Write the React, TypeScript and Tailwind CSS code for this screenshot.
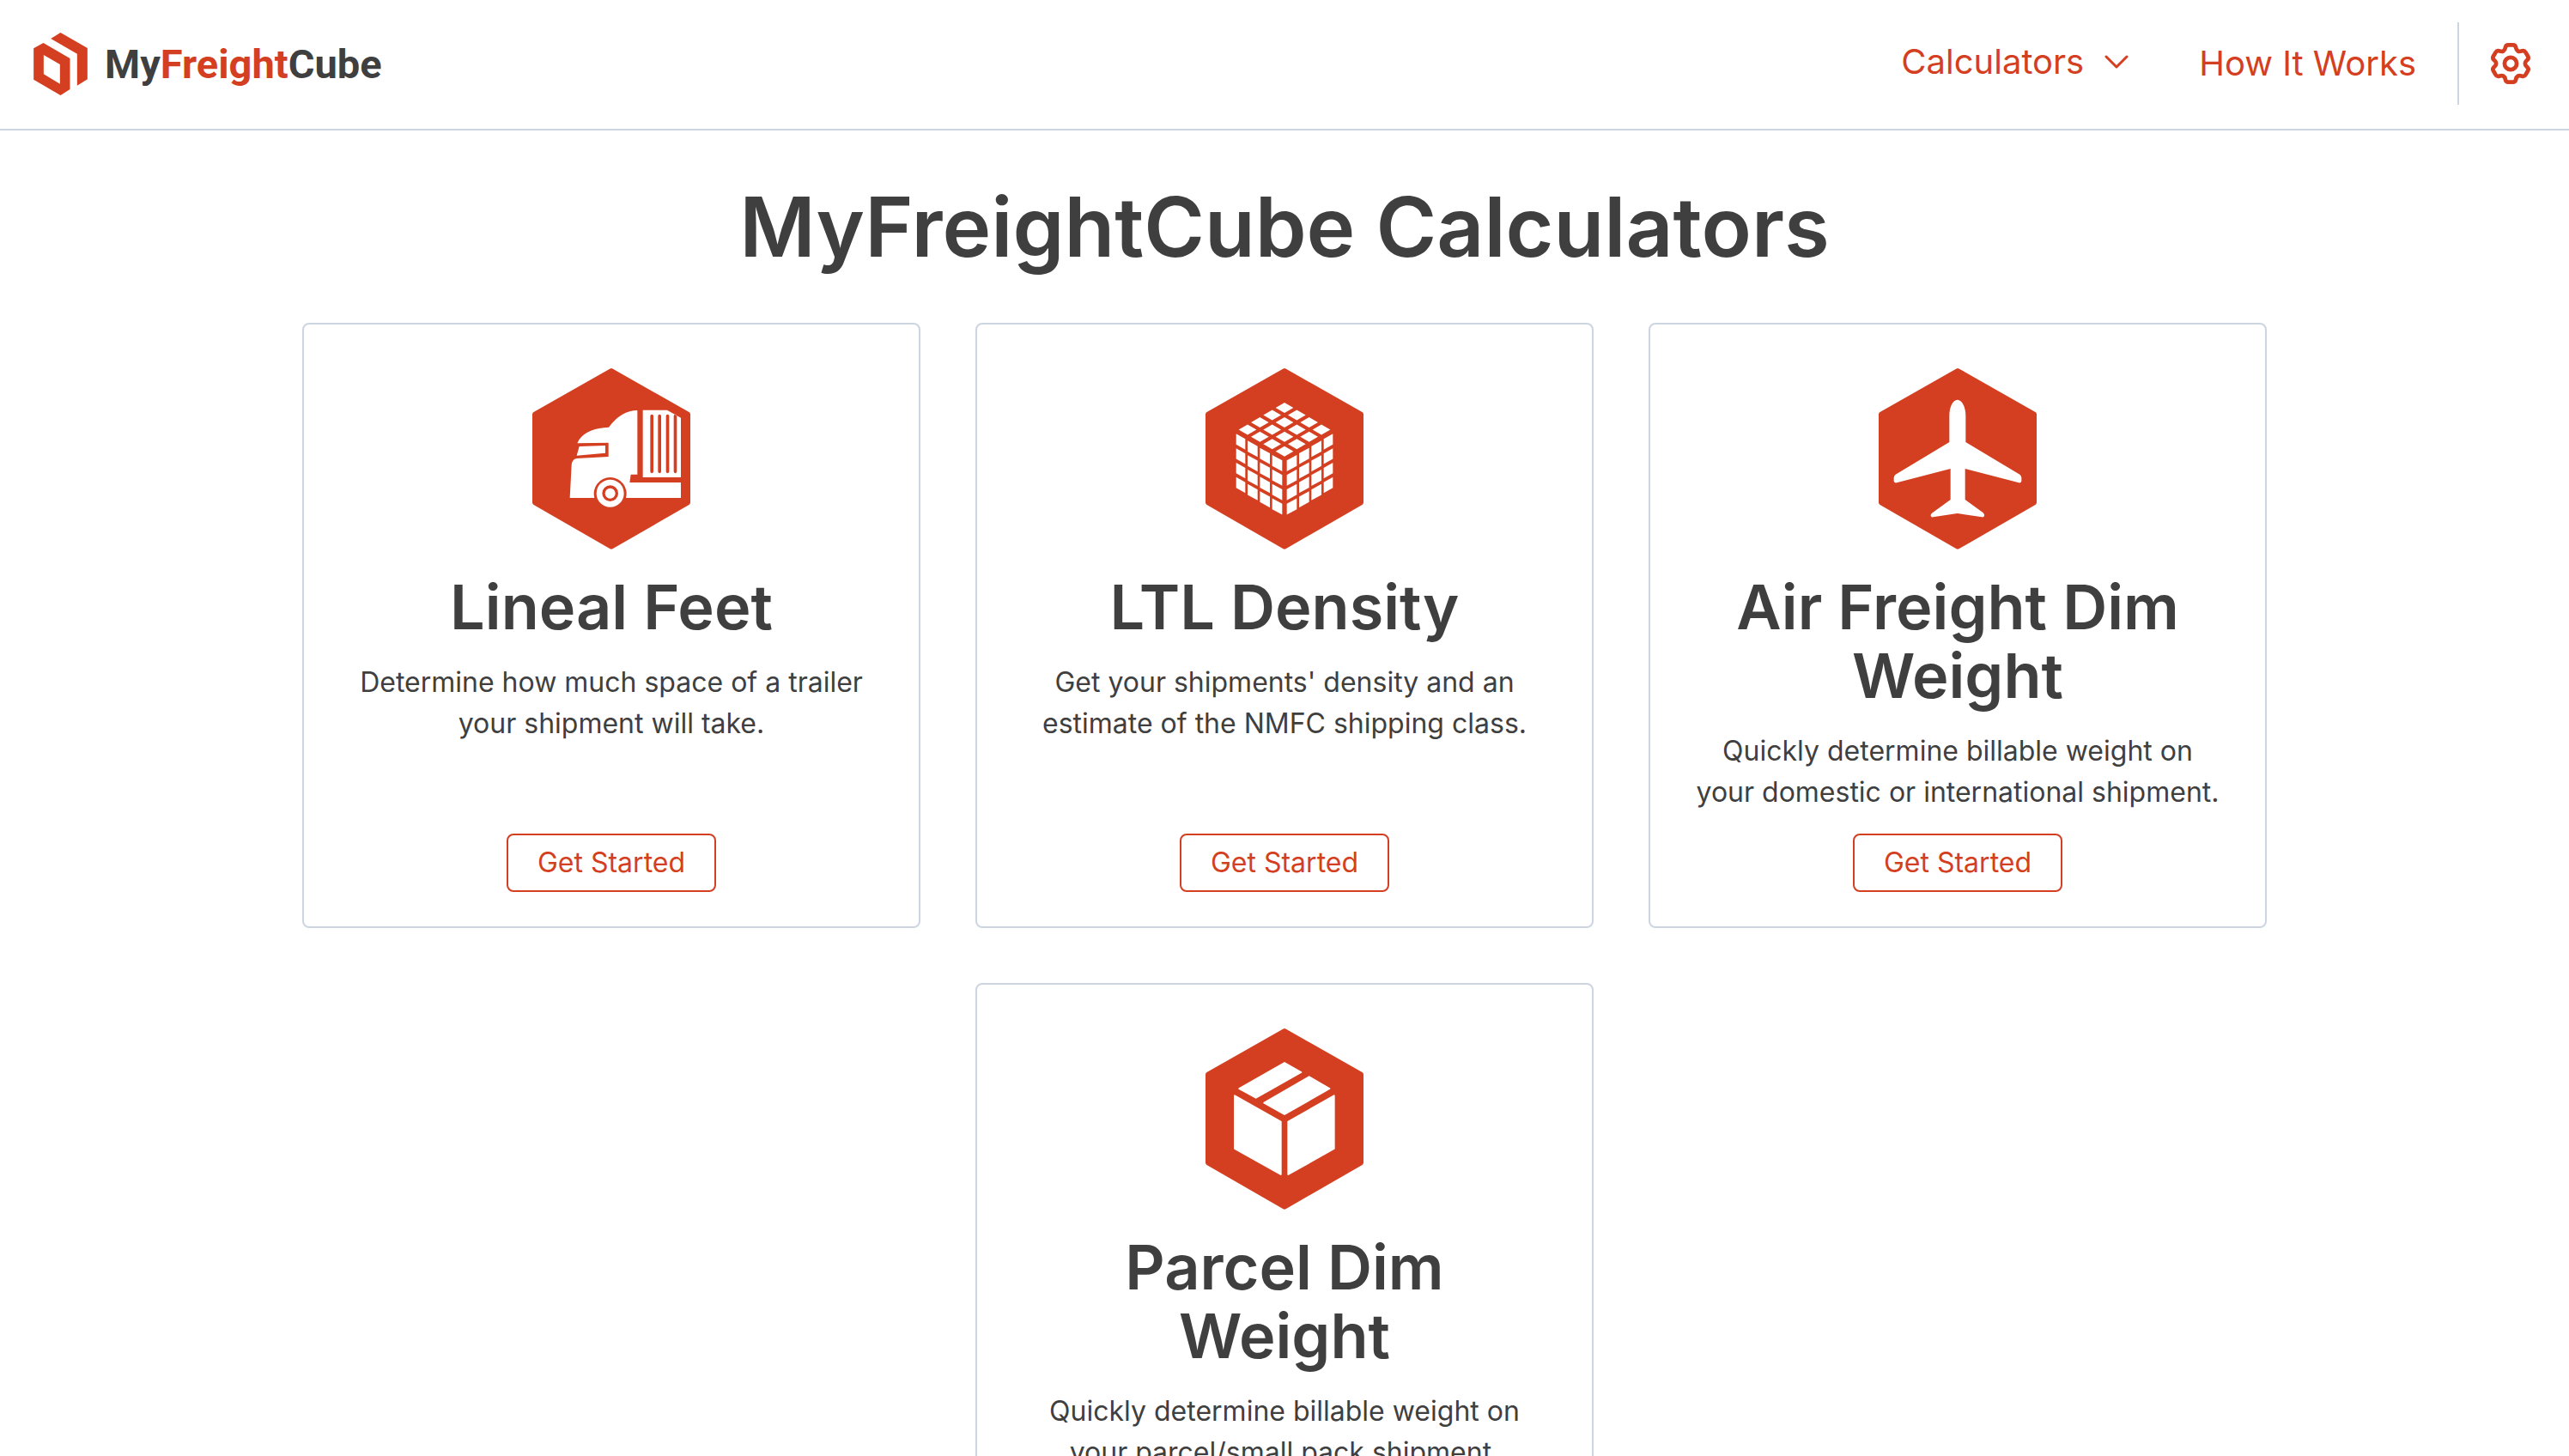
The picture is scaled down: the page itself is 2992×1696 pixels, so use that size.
import React from "react";

type Point = [number, number];

function rotate([x, y]: Point, degrees: number): Point {
  const a = (degrees * Math.PI) / 180;
  return [x * Math.cos(a) - y * Math.sin(a), x * Math.sin(a) + y * Math.cos(a)];
}

function toward(from: Point, to: Point, distance: number): Point {
  const length = Math.hypot(to[0] - from[0], to[1] - from[1]);
  const t = Math.min(distance / length, 0.5);
  return [from[0] + (to[0] - from[0]) * t, from[1] + (to[1] - from[1]) * t];
}

function roundedPath(points: Point[], radius: number): string {
  return (
    points
      .map((p, i) => {
        const prev = points[(i + points.length - 1) % points.length];
        const next = points[(i + 1) % points.length];
        const a = toward(p, prev, radius);
        const b = toward(p, next, radius);
        return `${i === 0 ? "M" : "L"}${a.join(" ")} Q${p.join(" ")} ${b.join(" ")}`;
      })
      .join(" ") + " Z"
  );
}

const tooth: Point[] = [
  [-20, -46],
  [-16, -64],
  [16, -64],
  [20, -46],
];
const gearPath = roundedPath(
  [0, 60, 120, 180, 240, 300].flatMap((deg) => tooth.map((p) => rotate(p, deg))),
  8,
);

function GearIcon() {
  return (
    <svg viewBox="-71 -71 142 142" className="size-12" fill="none" stroke="currentColor" strokeWidth="14" aria-hidden="true">
      <path d={gearPath} strokeLinejoin="round" />
      <circle r="21" />
    </svg>
  );
}

function ChevronIcon() {
  return (
    <svg viewBox="0 0 28 16" className="h-4 w-7" fill="none" stroke="currentColor" strokeWidth="3" strokeLinecap="round" strokeLinejoin="round" aria-hidden="true">
      <path d="M2 2 14 14 26 2" />
    </svg>
  );
}

function LogoMark() {
  return (
    <svg viewBox="28 22 188 219" className="h-[73px] w-[63px]" fill="#d43f21" aria-hidden="true">
      <path d="M122 22 216 76V185L180 207V96L88 43Z" />
      <path fillRule="evenodd" d="M62 58 155 112V220L122 241 28 186V77ZM63 100V167L120 201V133Z" />
    </svg>
  );
}

function Hexagon({ children }: { children: React.ReactNode }) {
  return (
    <svg viewBox="61 54 552 636" className="h-[212px] w-[184px]" aria-hidden="true">
      <path
        d="M337 66 604 218V526L337 680 70 526V218Z"
        fill="#d43f21"
        stroke="#d43f21"
        strokeWidth="18"
        strokeLinejoin="round"
      />
      {children}
    </svg>
  );
}

function TruckIcon() {
  return (
    <Hexagon>
      <g fill="#fff">
        <path d="M428 204V428H405L401 456H580V510H388A57 57 0 1 0 278 510H192L198 395Q200 374 216 372L327 366V317L218 319Q238 268 328 263Q372 204 428 204Z" />
        <path d="M225 330 316 327V353L216 362Z" />
        <path fillRule="evenodd" d="M447 203H532L580 230V438H447ZM473 224V418A5 5 0 0 0 484 418V224A5 5 0 0 0 473 224ZM500 224V418A5 5 0 0 0 511 418V224A5 5 0 0 0 500 224ZM528 224V418A5 5 0 0 0 539 418V224A5 5 0 0 0 528 224ZM555 224V418A5 5 0 0 0 566 418V224A5 5 0 0 0 555 224Z" />
        <circle cx="333" cy="494" r="48" />
      </g>
      <circle cx="333" cy="494" r="23" fill="none" stroke="#d43f21" strokeWidth="10" />
    </Hexagon>
  );
}

const steps = [0, 1, 2, 3];

function CubeIcon() {
  return (
    <Hexagon>
      <g fill="#fff">
        {steps.flatMap((i) =>
          steps.map((j) => (
            <g key={`${i}-${j}`}>
              <path transform={`translate(${337 + (i - j) * 43} ${195 + (i + j) * 25.4})`} d="M0-18 31 0 0 18-31 0Z" />
              <path
                transform={`translate(${168 + i * 43} ${286 + i * 25 + j * 50.5})`}
                d={i === 0 ? "M0 0 32 18V55L0 37Z" : "M-3-1 32 18V56L-3 37Z"}
              />
              <path
                transform={`translate(${506 - i * 43} ${286 + i * 25 + j * 50.5}) scale(-1 1)`}
                d={i === 0 ? "M0 0 32 18V55L0 37Z" : "M-3-1 32 18V56L-3 37Z"}
              />
            </g>
          )),
        )}
      </g>
    </Hexagon>
  );
}

function PlaneIcon() {
  return (
    <Hexagon>
      <path
        fill="#fff"
        transform="translate(-24 0)"
        d="M360 167C376 167 389 192 389 222V315L578 428Q584 432 584 440V451Q583 459 575 457L387 408V516L450 562Q455 567 454 572Q453 578 446 577L360 564 275 577Q268 578 267 572Q266 567 271 563L336 516V408L148 457Q139 459 138 451V440Q138 432 144 428L332 315V222C332 192 344 167 360 167Z"
      />
    </Hexagon>
  );
}

function BoxIcon() {
  return (
    <Hexagon>
      <g fill="#fff" stroke="#fff" strokeWidth="6" strokeLinejoin="round">
        <path d="M337 177 395 210 237 299 179 267Z" />
        <path d="M423 226 494 267 337 357 266 317Z" />
        <path d="M163 292 324 383V567L163 477Z" />
        <path d="M510 292 350 383V567L510 477Z" />
      </g>
    </Hexagon>
  );
}

const calculators = [
  { title: "Lineal Feet", text: "Determine how much space of a trailer your shipment will take.", icon: <TruckIcon /> },
  { title: "LTL Density", text: "Get your shipments' density and an estimate of the NMFC shipping class.", icon: <CubeIcon /> },
  { title: "Air Freight Dim Weight", text: "Quickly determine billable weight on your domestic or international shipment.", icon: <PlaneIcon /> },
  { title: "Parcel Dim Weight", text: "Quickly determine billable weight on your parcel/small pack shipment.", icon: <BoxIcon /> },
];

function Header() {
  return (
    <header className="flex h-[152px] items-center justify-between border-b-2 border-[#cdd5e1] pr-11 pb-0.5 pl-[39px]">
      <a href="#home" className="flex items-center gap-5">
        <LogoMark />
        <span className="font-[Roboto,sans-serif] text-[47px] leading-none font-bold text-[#3f3f3f]">
          My<span className="text-[#d43f21]">Freight</span>Cube
        </span>
      </a>
      <nav className="flex items-center text-[40px] leading-[48px] text-[#d43f21]">
        <button type="button" className="flex items-center gap-6 pb-1">
          Calculators
          <ChevronIcon />
        </button>
        <a href="#how-it-works" className="ml-[82px]">
          How It Works
        </a>
        <div className="ml-12 flex h-24 items-center border-l-2 border-[#cdd5e1] pl-9">
          <button type="button" aria-label="Settings">
            <GearIcon />
          </button>
        </div>
      </nav>
    </header>
  );
}

export default function App() {
  return (
    <div className="min-h-screen bg-white pb-16 font-[Inter,sans-serif] text-[#3f3f3f]">
      <Header />
      <main>
        <h1 className="my-16 text-center text-8xl leading-none font-semibold">MyFreightCube Calculators</h1>
        <ul className="mx-auto flex max-w-[2288px] flex-wrap justify-center gap-16">
          {calculators.map((c) => (
            <li
              key={c.title}
              className="flex w-[720px] flex-col items-center rounded-lg border-2 border-[#cdd5e1] px-12 pt-[50px] pb-10 text-center"
            >
              {c.icon}
              <h2 className="mt-[27px] text-7xl leading-[80px] font-semibold">{c.title}</h2>
              <p className="my-6 text-[32px] leading-[48px]">{c.text}</p>
              <button
                type="button"
                className="mt-auto h-[68px] rounded-lg border-2 border-[#d43f21] px-[34px] text-[32px] leading-[48px] text-[#d43f21]"
              >
                Get Started
              </button>
            </li>
          ))}
        </ul>
      </main>
    </div>
  );
}
